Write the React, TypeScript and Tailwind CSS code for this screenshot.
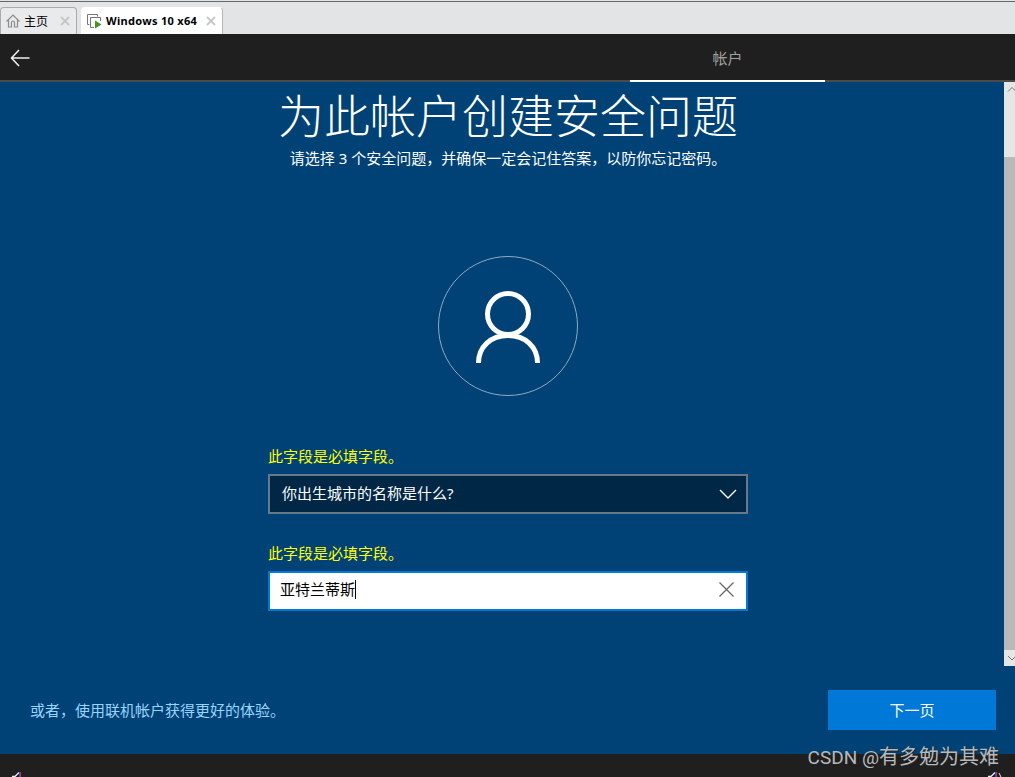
import React from 'react';

interface TabProps {
  title: string;
  active?: boolean;
  icon: React.ReactNode;
}

const HomeIcon: React.FC = () => (
  <svg className="h-[14px] w-[14px] shrink-0" viewBox="0 0 14 14" fill="none" stroke="#8c8c8c" strokeWidth={1.2}>
    <path d="M0.5 7.5L7 1l6.5 6.5" />
    <path d="M2.5 6v7h3V8.5a1.5 1.5 0 013 0V13h3V6" />
  </svg>
);

const MachineIcon: React.FC = () => (
  <svg className="h-[15px] w-[15px] shrink-0" viewBox="0 0 15 15" fill="none">
    <path d="M2.5 10.5h-2v-10h10v2" stroke="#757575" />
    <path d="M7 13.5H3.5v-10h10V7" stroke="#757575" />
    <path d="M8 6.5v8l6.5-4z" fill="#43981b" />
  </svg>
);

const Tab: React.FC<TabProps> = ({ title, active, icon }) => (
  <div
    className={`flex h-[27px] items-center rounded-t-[4px] border border-b-0 text-black ${
      active
        ? 'ml-[4px] w-[142px] border-[#b4b4b4] border-l-white border-t-white bg-white pl-[5px]'
        : 'w-[77px] border-[#a9abad] bg-[#e9eaeb] pl-[5px]'
    }`}
  >
    {icon}
    <span
      className={`whitespace-nowrap leading-[14px] ${
        active
          ? "ml-[4px] w-[92px] font-['Noto_Sans','Open_Sans',sans-serif] text-[11px] font-bold tracking-[0.3px]"
          : "ml-[4px] w-[24px] font-['Noto_Sans_CJK_SC',sans-serif] text-[12px]"
      }`}
    >
      {title}
    </span>
    <svg
      className={`h-[10px] w-[10px] shrink-0 ${active ? 'ml-[8px]' : 'ml-[12px]'}`}
      viewBox="0 0 10 10"
      stroke="#c6c6c6"
      strokeWidth={1.8}
    >
      <path d="M1 1l8 8M9 1L1 9" />
    </svg>
  </div>
);

const UserAvatar: React.FC = () => (
  <svg className="h-[140px] w-[140px]" viewBox="0 0 140 140" fill="none" stroke="#fff">
    <circle cx="70" cy="70" r="69.5" stroke="#8faac0" />
    <circle cx="70" cy="58" r="20.5" strokeWidth={5} />
    <path d="M40.5 107c0-16.5 12.5-27.5 29.5-27.5s29.5 11 29.5 27.5" strokeWidth={5} />
  </svg>
);

const Speaker: React.FC<{ waves?: boolean }> = ({ waves }) => (
  <svg className="h-[5px] w-[14px]" viewBox="0 0 14 5" fill="none">
    <path d="M0 4.5h3L7 0.5" stroke="#f0f0f0" strokeWidth={1.3} />
    <path d="M7.5 0v5" stroke="#3b43c4" />
    <path d="M8.5 0v5" stroke="#c33840" />
    {waves && <path d="M11 1l2 4" stroke="#e8e8e8" />}
  </svg>
);

const RequiredMessage: React.FC = () => (
  <p className="text-[15px] leading-[20px] text-[#ffff00]">此字段是必填字段。</p>
);

export default function App() {
  return (
    <div className="flex h-[777px] w-[1015px] flex-col overflow-hidden bg-[#004275] font-['Noto_Sans','Noto_Sans_CJK_SC',sans-serif]">
      {/* VM tabs */}
      <div className="flex h-[34px] shrink-0 flex-col bg-[#e3e4e6]">
        <div className="mt-px h-px bg-[#666869]" />
        <div className="mt-[5px] flex">
          <Tab title="主页" icon={<HomeIcon />} />
          <Tab title="Windows 10 x64" icon={<MachineIcon />} active />
        </div>
      </div>

      {/* Setup header */}
      <header className="flex h-[48px] shrink-0 border-b-2 border-[#4b4b4b] bg-[#1f1f1f]">
        <button className="flex h-[46px] w-[630px] items-center pl-[10px]">
          <svg className="mt-[2px] h-[18px] w-[20px]" viewBox="0 0 20 18" fill="none" stroke="#f0f0f0" strokeWidth={1.5}>
            <path d="M9 1L1.5 9L9 17M1.5 9H19.5" />
          </svg>
        </button>
        <div className="flex h-[48px] w-[195px] items-center justify-center border-b-2 border-white text-[15px] text-[#a0a0a0]">
          <span className="pt-px font-['Noto_Sans_CJK_SC',sans-serif] leading-[20px]">帐户</span>
        </div>
      </header>

      <div className="flex h-[584px] shrink-0">
        <main className="flex w-[1004px] flex-col items-center pl-[12px] text-white">
          <h1 className="mt-px h-[60px] whitespace-nowrap font-['Noto_Sans_CJK_SC',sans-serif] text-[46px] font-light leading-[60px]">
            为此帐户创建安全问题
          </h1>
          <p className="mt-[5px] whitespace-nowrap text-[15px] leading-[20px]">
            请选择 3 个安全问题，并确保一定会记住答案，以防你忘记密码。
          </p>
          <div className="mt-[88px]">
            <UserAvatar />
          </div>

          <div className="mt-[50px] w-[480px]">
            <RequiredMessage />
            <div className="mt-[8px] flex h-[40px] items-center justify-between border-2 border-[#66788a] bg-[#002746] pl-[12px] pr-[9px] text-[15px]">
              <span className="pb-[2px] leading-[20px]">你出生城市的名称是什么?</span>
              <svg className="h-[10px] w-[18px]" viewBox="0 0 18 10" fill="none" stroke="#fff" strokeWidth={1.4}>
                <path d="M1 1l8 8 8-8" />
              </svg>
            </div>
            <div className="mt-[29px]">
              <RequiredMessage />
            </div>
            <div className="mt-[8px] flex h-[40px] items-center border-2 border-[#0078d7] bg-white pb-[3px] pl-[10px] pr-[12px] text-[15px] text-black">
              <span className="pb-px leading-[20px]">亚特兰蒂斯</span>
              <span className="h-[19px] w-px bg-black" />
              <svg className="ml-auto h-[15px] w-[15px]" viewBox="0 0 15 15" fill="none" stroke="#666" strokeWidth={1.3}>
                <path d="M0.5 0.5l14 14M14.5 0.5l-14 14" />
              </svg>
            </div>
          </div>
        </main>

        {/* Scrollbar */}
        <div className="flex w-[11px] flex-col overflow-hidden bg-[#e6e6e6]">
          <svg className="h-[75px] w-[11px]" viewBox="0 0 11 75" fill="none" stroke="#777">
            <path d="M4 9.5L8 5.5l4 4" />
          </svg>
          <div className="h-[493px] bg-[#b9b9b9]" />
          <svg className="h-[16px] w-[11px]" viewBox="0 0 11 16" fill="none" stroke="#777">
            <path d="M4 6l4 4 4-4" />
          </svg>
        </div>
      </div>

      <div className="flex h-[88px] shrink-0 items-start justify-between pl-[30px] pr-[19px] pt-[24px]">
        <a className="mt-[10px] text-[15px] leading-[20px] text-[#99d4ff]">或者，使用联机帐户获得更好的体验。</a>
        <button className="h-[40px] w-[168px] bg-[#0078d7] text-[15px] leading-[20px] text-white">下一页</button>
      </div>

      <footer className="relative flex h-[23px] shrink-0 items-end justify-between bg-[#1f1f1f] pl-[12px] pr-[13px]">
        <Speaker />
        <Speaker waves />
        <span className="absolute right-[16px] top-[-12px] whitespace-nowrap font-['Noto_Sans_CJK_SC',sans-serif] text-[20px] leading-[28px] text-[#b5b9bc] [text-shadow:1px_1px_1px_#222]">
          <span className="font-['Roboto',sans-serif] text-[19px]">CSDN @</span>
          有多勉为其难
        </span>
      </footer>
    </div>
  );
}
